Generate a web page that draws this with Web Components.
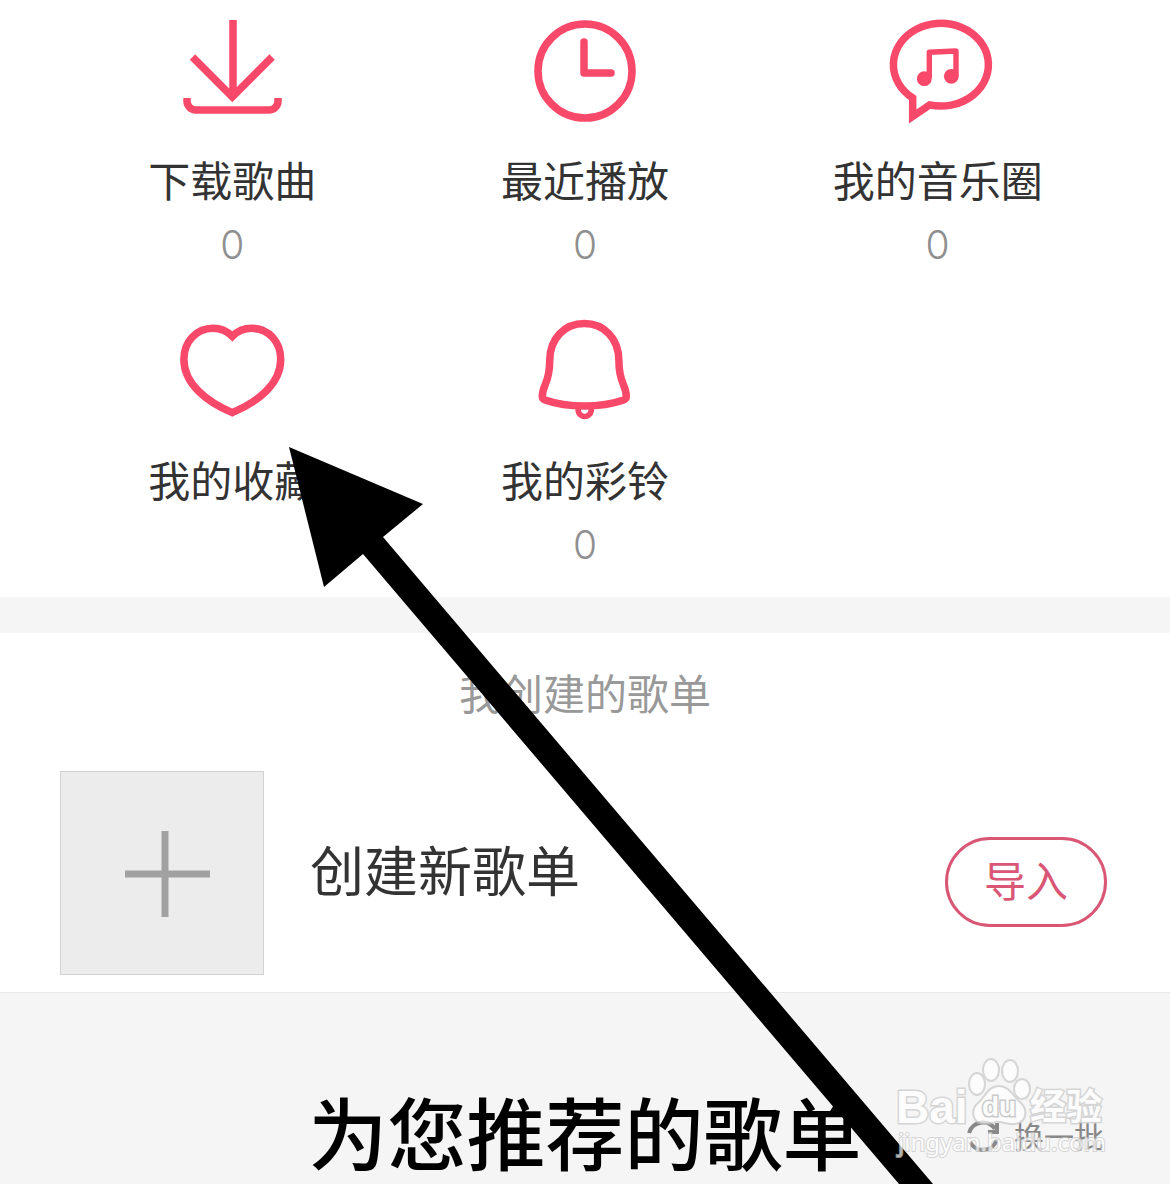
<!DOCTYPE html>
<html lang="zh-CN">
<head>
<meta charset="utf-8">
<meta name="viewport" content="width=device-width, initial-scale=1">
<title>我的音乐</title>
<style>
    body {
        margin: 0;
        background-color: #ffffff;
        color: #333333;
        font-family: "Noto Sans CJK SC", sans-serif;
    }
</style>
</head>
<body>
<music-page></music-page>

<script>
const ICONS = {
    download: `
        <path d="M54 2v76M13.5 39l39.8 40 39.8-40"/>
        <path d="M8 80v3a9 9 0 0 0 9 9h73a9 9 0 0 0 9-9v-3"/>`,
    clock: `
        <circle cx="53" cy="53" r="47"/>
        <path d="M52 24v31h27" stroke-linecap="round" stroke-linejoin="round"/>`,
    circle: `
        <path d="M27.7 80A47.5 41.4 0 1 1 44.6 86.9L27.7 98.5Z"/>
        <path d="M44.3 60V34.3L71 33V58" stroke-width="5.4" stroke-linejoin="round"/>
        <circle class="solid" cx="39.3" cy="60.7" r="7.4"/>
        <circle class="solid" cx="66.3" cy="58.3" r="7.4"/>`,
    heart: `
        <path d="M53.3 18.4C48 13 41 10.3 34 10.3C17 10.3 4.9 24 4.9 41.5C4.9 66 28 84 53.3 94.6C78.6 84 101.7 66 101.7 41.5C101.7 24 89.6 10.3 72.6 10.3C65.6 10.3 58.6 13 53.3 18.4Z"/>`,
    bell: `
        <path d="M52.3 5.6C33 5.6 17.7 20 17.7 43C17.7 66 10.3 66 10.3 78.5Q10.3 81 13 82Q30 88 52.3 88Q74.6 88 91.6 82Q94.3 81 94.3 78.5C94.3 66 86.9 66 86.9 43C86.9 20 71.6 5.6 52.3 5.6Z"/>
        <path d="M46.2 91v2a6.6 6.6 0 0 0 13 0v-2" stroke-width="5.6"/>`
};

class MusicEntry extends HTMLElement
{
    constructor()
    {
        super();
        this.shadow = this.attachShadow({mode: "open"});
    }
    connectedCallback()
    {
        this.render();
    }
    style()
    {
        return `
            <style>
                :host {
                    display: block;
                }
                a {
                    display: flex;
                    flex-direction: column;
                    align-items: center;
                    color: inherit;
                    text-decoration: none;
                }
                svg {
                    width: 106px;
                    height: 106px;
                    margin-bottom: 28px;
                    overflow: visible;
                    fill: none;
                    stroke: #f9496a;
                    stroke-width: 7.5;
                }
                .solid {
                    fill: #f9496a;
                    stroke: none;
                }
                .label {
                    font-size: 42px;
                    line-height: 54px;
                    white-space: nowrap;
                }
                .count {
                    height: 78px;
                    color: #8f8f8f;
                    font-family: Inter, sans-serif;
                    font-size: 39px;
                    font-weight: 300;
                    line-height: 78px;
                }
            </style>
        `;
    }
    render()
    {
        this.shadow.innerHTML = `
            ${this.style()}
            <a href="#">
                <svg viewBox="0 0 106 106" aria-hidden="true">${ICONS[this.getAttribute("icon")]}</svg>
                <span class="label"><slot></slot></span>
                <span class="count">${this.getAttribute("count") || ""}</span>
            </a>
        `;
    }
}
customElements.define('music-entry', MusicEntry);

class PlaylistRow extends HTMLElement
{
    constructor()
    {
        super();
        this.shadow = this.attachShadow({mode: "open"});
    }
    connectedCallback()
    {
        this.render();
    }
    style()
    {
        return `
            <style>
                :host {
                    display: flex;
                    justify-content: space-between;
                    align-items: center;
                    padding: 0 63px 0 60px;
                }
                .create {
                    display: flex;
                    align-items: flex-start;
                    gap: 46px;
                    padding-bottom: 17px;
                    color: inherit;
                    text-decoration: none;
                    font-size: 54px;
                    line-height: 196px;
                }
                .cover {
                    box-sizing: border-box;
                    width: 204px;
                    height: 204px;
                    border: 1px solid #d2d2d2;
                    background-color: #ececec;
                }
                .cover svg {
                    display: block;
                    fill: none;
                    stroke: #a1a1a1;
                    stroke-width: 7;
                }
                button {
                    box-sizing: border-box;
                    width: 162px;
                    height: 90px;
                    padding: 0 0 6px;
                    border: 3px solid #d95675;
                    border-radius: 45px;
                    background: none;
                    color: #d95675;
                    font-family: inherit;
                    font-size: 42px;
                    line-height: 54px;
                }
            </style>
        `;
    }
    render()
    {
        this.shadow.innerHTML = `
            ${this.style()}
            <a class="create" href="#">
                <span class="cover">
                    <svg viewBox="0 0 202 202" aria-hidden="true"><path d="M104 59v86M64 102h85"/></svg>
                </span>
                <slot></slot>
            </a>
            <button type="button">导入</button>
        `;
    }
}
customElements.define('playlist-row', PlaylistRow);

class RecommendHeader extends HTMLElement
{
    constructor()
    {
        super();
        this.shadow = this.attachShadow({mode: "open"});
    }
    connectedCallback()
    {
        this.render();
    }
    style()
    {
        return `
            <style>
                :host {
                    display: grid;
                    grid-template-columns: 1fr auto 1fr;
                    align-items: center;
                    align-content: start;
                    padding: 90px 66px 0;
                    border-top: 1px solid #e8e8e8;
                    background-color: #f5f5f5;
                }
                h2 {
                    grid-column: 2;
                    margin: 0;
                    color: #000000;
                    font-size: 79px;
                    font-weight: 500;
                    line-height: 96px;
                    white-space: nowrap;
                }
                button {
                    display: flex;
                    align-items: flex-end;
                    justify-self: end;
                    gap: 14px;
                    padding: 8px 0 0;
                    border: 0;
                    background: none;
                    color: #888888;
                    font-family: inherit;
                    font-size: 30px;
                    line-height: 36px;
                    white-space: nowrap;
                }
                svg {
                    width: 34px;
                    height: 34px;
                    fill: none;
                    stroke: #888888;
                    stroke-width: 4;
                }
            </style>
        `;
    }
    render()
    {
        this.shadow.innerHTML = `
            ${this.style()}
            <h2><slot></slot></h2>
            <button type="button">
                <svg viewBox="0 0 34 34" aria-hidden="true">
                    <path d="M3 14A14.5 14.5 0 0 1 29 10M31 20A14.5 14.5 0 0 1 4 23"/>
                    <path d="M31 4v9h-9"/>
                </svg>
                换一批
            </button>
        `;
    }
}
customElements.define('recommend-header', RecommendHeader);

class PointerArrow extends HTMLElement
{
    constructor()
    {
        super();
        this.shadow = this.attachShadow({mode: "open"});
    }
    connectedCallback()
    {
        this.shadow.innerHTML = `
            <style>
                :host {
                    display: block;
                    position: absolute;
                    inset: 0;
                    pointer-events: none;
                }
                svg {
                    display: block;
                    width: 100%;
                    height: 100%;
                }
            </style>
            <svg viewBox="0 0 1170 1184" preserveAspectRatio="xMinYMin meet" aria-hidden="true">
                <path d="M289 447L423 504L383 537L933 1184H899L363 554L324 587Z"/>
            </svg>
        `;
    }
}
customElements.define('pointer-arrow', PointerArrow);

class WaterMark extends HTMLElement
{
    constructor()
    {
        super();
        this.shadow = this.attachShadow({mode: "open"});
    }
    connectedCallback()
    {
        this.render();
    }
    style()
    {
        return `
            <style>
                :host {
                    display: block;
                    position: absolute;
                    right: 60px;
                    bottom: 20px;
                    width: 214px;
                    height: 110px;
                    pointer-events: none;
                }
                svg {
                    display: block;
                    overflow: visible;
                    fill: #ffffff;
                    stroke: #c8c8c8;
                    stroke-width: 2;
                    opacity: 0.7;
                }
                text {
                    paint-order: stroke;
                    font-weight: 700;
                    stroke-width: 3;
                }
                .latin {
                    font-family: "Liberation Sans", sans-serif;
                    font-size: 46px;
                }
                .du {
                    font-family: "Liberation Sans", sans-serif;
                    font-size: 28px;
                    stroke: #b8b8b8;
                }
                .cjk {
                    font-size: 36px;
                }
                .site {
                    font-family: "Noto Sans", sans-serif;
                    font-size: 24px;
                    font-weight: 400;
                    stroke-width: 2;
                }
            </style>
        `;
    }
    render()
    {
        this.shadow.innerHTML = `
            ${this.style()}
            <svg viewBox="0 0 214 110">
                <ellipse cx="81" cy="30" rx="8" ry="11"/>
                <ellipse cx="95" cy="16" rx="8" ry="11"/>
                <ellipse cx="114" cy="17" rx="8" ry="11"/>
                <ellipse cx="126" cy="35" rx="8" ry="10"/>
                <path d="M103 32C92 32 90 42 82 49C74 56 76 70 89 70C95 70 98 68 103 68C108 68 112 71 118 70C131 69 132 56 125 49C116 41 113 32 103 32Z"/>
                <text class="latin" x="0" y="69">Bai</text>
                <text class="du" x="86" y="62">du</text>
                <text class="cjk" x="134" y="66">经验</text>
                <text class="site" x="2" y="97">jingyan.baidu.com</text>
            </svg>
        `;
    }
}
customElements.define('water-mark', WaterMark);

class MusicPage extends HTMLElement
{
    constructor()
    {
        super();
        this.shadow = this.attachShadow({mode: "open"});
    }
    connectedCallback()
    {
        this.render();
    }
    style()
    {
        return `
            <style>
                :host {
                    display: flex;
                    flex-direction: column;
                    position: relative;
                    min-height: 100vh;
                    overflow: hidden;
                }
                .entries {
                    display: grid;
                    grid-template-columns: repeat(3, 1fr);
                    row-gap: 34px;
                    padding: 18px 56px 13px;
                }
                .playlists {
                    padding-top: 32px;
                    border-top: 36px solid #f5f5f5;
                }
                h3 {
                    margin: 0 0 52px;
                    color: #999999;
                    font-size: 42px;
                    font-weight: 400;
                    line-height: 54px;
                    text-align: center;
                }
                recommend-header {
                    flex: 1;
                }
            </style>
        `;
    }
    render()
    {
        this.shadow.innerHTML = `
            ${this.style()}
            <nav class="entries">
                <music-entry icon="download" count="0">下载歌曲</music-entry>
                <music-entry icon="clock" count="0">最近播放</music-entry>
                <music-entry icon="circle" count="0">我的音乐圈</music-entry>
                <music-entry icon="heart">我的收藏</music-entry>
                <music-entry icon="bell" count="0">我的彩铃</music-entry>
            </nav>
            <section class="playlists">
                <h3>我创建的歌单</h3>
                <playlist-row>创建新歌单</playlist-row>
            </section>
            <recommend-header>为您推荐的歌单</recommend-header>
            <pointer-arrow></pointer-arrow>
            <water-mark></water-mark>
        `;
    }
}
customElements.define('music-page', MusicPage);
</script>
</body>
</html>
